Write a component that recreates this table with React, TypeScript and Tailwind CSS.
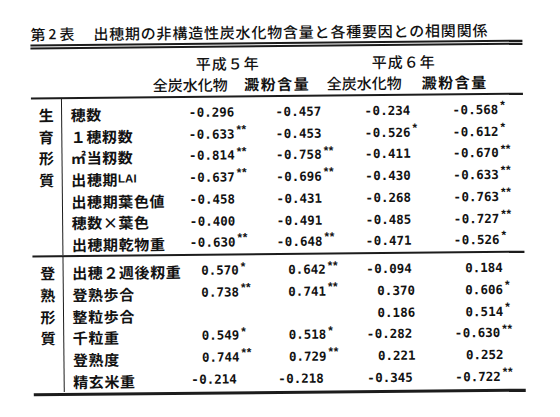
import React from "react";

const JP = { fontFamily: '"Noto Sans CJK JP", "Noto Sans", sans-serif' };

type Row = { label: React.ReactNode; v: string[] };

const g1: Row[] = [
  { label: "穂数", v: ["-0.296", "-0.457", "-0.234", "-0.568*"] },
  { label: "１穂籾数", v: ["-0.633**", "-0.453", "-0.526*", "-0.612*"] },
  { label: "㎡当籾数", v: ["-0.814**", "-0.758**", "-0.411", "-0.670**"] },
  {
    label: (
      <>
        出穂期
        <span
          className="text-[11.5px] font-bold tracking-[0px]"
          style={{ fontFamily: '"Liberation Sans", sans-serif' }}
        >
          LAI
        </span>
      </>
    ),
    v: ["-0.637**", "-0.696**", "-0.430", "-0.633**"],
  },
  { label: "出穂期葉色値", v: ["-0.458", "-0.431", "-0.268", "-0.763**"] },
  { label: "穂数×葉色", v: ["-0.400", "-0.491", "-0.485", "-0.727**"] },
  { label: "出穂期乾物重", v: ["-0.630**", "-0.648**", "-0.471", "-0.526*"] },
];

const g2: Row[] = [
  { label: "出穂２週後籾重", v: ["0.570*", "0.642**", "-0.094", "0.184"] },
  { label: "登熟歩合", v: ["0.738**", "0.741**", "0.370", "0.606*"] },
  { label: "整粒歩合", v: ["", "", "0.186", "0.514*"] },
  { label: "千粒重", v: ["0.549*", "0.518*", "-0.282", "-0.630**"] },
  { label: "登熟度", v: ["0.744**", "0.729**", "0.221", "0.252"] },
  { label: "精玄米重", v: ["-0.214", "-0.218", "-0.345", "-0.722**"] },
];

function Num({ s }: { s: string }) {
  if (!s) return null;
  const neg = s.startsWith("-");
  const body = s.replace("-", "").replace(/\*/g, "");
  const stars = (s.match(/\*/g) || []).join("");
  return (
    <span
      className="flex items-center whitespace-nowrap text-[12.5px] font-bold leading-none text-[#121212]"
      style={{ fontFamily: '"DejaVu Sans Mono", "Liberation Mono", monospace' }}
    >
      <span className="inline-block w-[8px]">{neg ? "-" : ""}</span>
      <span className={neg ? "" : "pl-[3px]"}>{body}</span>
      {stars && (
        <span
          className="relative -top-[5px] ml-[2px] text-[12px] font-bold leading-none tracking-[0.5px]"
          style={{ fontFamily: '"Liberation Sans", sans-serif' }}
        >
          {stars}
        </span>
      )}
    </span>
  );
}

function Group({ chars, rows, last }: { chars: string[]; rows: Row[]; last?: boolean }) {
  return (
    <div
      className={
        "flex border-[#1c1c1c] " + (last ? "border-b-[3px] pb-[1px]" : "border-b-2")
      }
    >
      <div className="w-[31px] shrink-0 border-r-[1.5px] border-[#1c1c1c] pt-[4.5px]">
        {chars.map((c) => (
          <div
            key={c}
            className="flex h-[21.7px] items-center justify-center text-[15px] font-bold leading-none text-[#121212]"
            style={JP}
          >
            {c}
          </div>
        ))}
      </div>
      <div className="shrink-0 pt-[4.5px]">
        {rows.map((r, i) => (
          <div key={i} className="flex h-[21.7px] items-center">
            <div
              className="flex w-[115.5px] shrink-0 items-center whitespace-nowrap pl-[8.5px] text-[15px] font-bold leading-none tracking-[0.6px] text-[#121212]"
              style={JP}
            >
              {r.label}
            </div>
            {r.v.map((s, j) => (
              <div
                key={j}
                className={
                  "flex shrink-0 " +
                  (j === 3 ? "w-[80px] pl-[11px]" : j === 1 ? "w-[88px] pl-[10px]" : "w-[88px] pl-[11px]")
                }
              >
                <Num s={s} />
              </div>
            ))}
          </div>
        ))}
      </div>
    </div>
  );
}

export default function App() {
  return (
    <div className="relative h-[417px] w-[560px] overflow-hidden bg-white text-[#121212]">
      <div className="-rotate-[0.55deg] pl-[32px]">
        <div className="w-[492px]">
          {/* Title */}
          <div
            className="mt-[21px] flex h-[20px] items-center whitespace-nowrap text-[15px] font-medium leading-none"
            style={JP}
          >
            <span>第</span>
            <span className="px-[3px] text-[14px]">2</span>
            <span>表</span>
            <span className="ml-[19px] tracking-[0.8px]">
              出穂期の非構造性炭水化物含量と各種要因との相関関係
            </span>
          </div>
          {/* double rule */}
          <div className="mt-[1px] h-[5px] border-y-2 border-[#1c1c1c]" />
          {/* header */}
          <div className="border-b-2 border-[#1c1c1c] pb-[2px] pt-[5px]" style={JP}>
            <div className="flex h-[20px] items-center whitespace-nowrap text-[15px] font-medium leading-none">
              <div className="w-[116px] shrink-0" />
              <div className="w-[162px] shrink-0 text-center tracking-[1px]">平成５年</div>
              <div className="w-[190px] shrink-0 text-center tracking-[1px]">平成６年</div>
            </div>
            <div className="mt-[1px] flex h-[20px] items-center whitespace-nowrap text-[15px] font-medium leading-none">
              <div className="w-[116px] shrink-0" />
              <div className="w-[87px] shrink-0 text-center">全炭水化物</div>
              <div className="w-[87px] shrink-0 text-center font-bold tracking-[1.5px]">澱粉含量</div>
              <div className="w-[87px] shrink-0 text-center">全炭水化物</div>
              <div className="w-[94px] shrink-0 text-center font-bold tracking-[1.5px]">澱粉含量</div>
            </div>
          </div>
          <Group chars={["生", "育", "形", "質"]} rows={g1} />
          <Group chars={["登", "熟", "形", "質"]} rows={g2} last />
        </div>
      </div>
    </div>
  );
}
